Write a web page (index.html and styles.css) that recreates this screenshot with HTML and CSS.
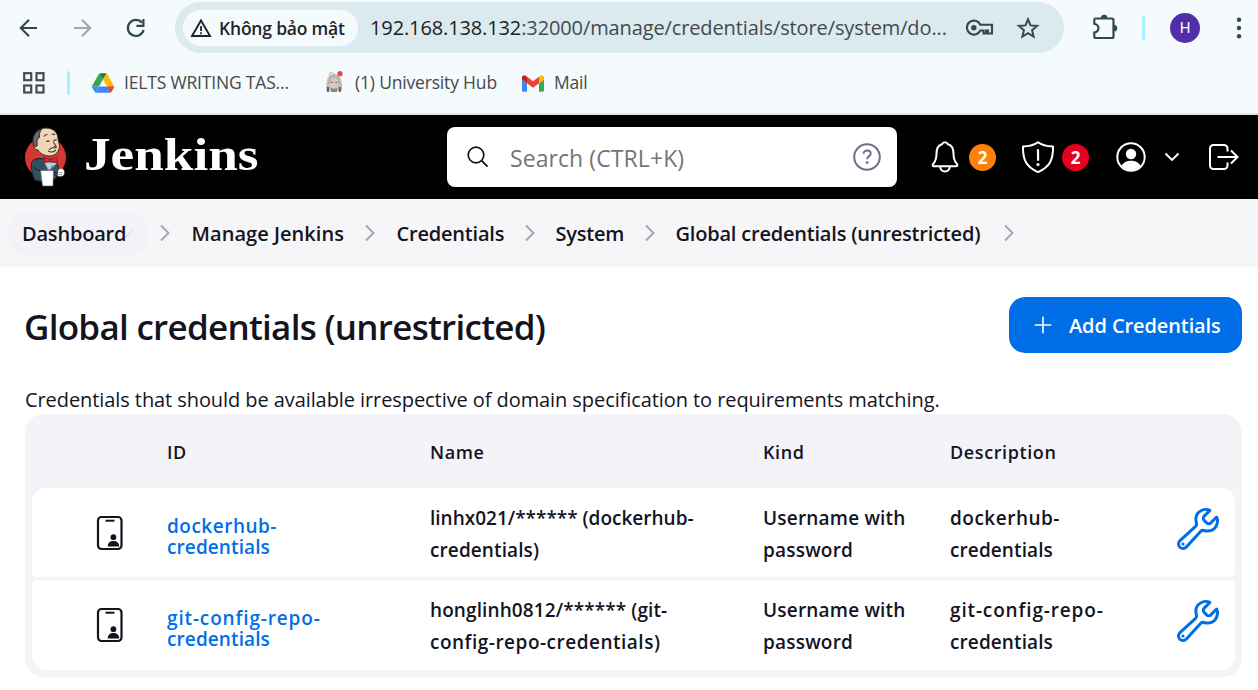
FILE: index.html
```
<!DOCTYPE html>
<html lang="vi">
<head>
<meta charset="utf-8">
<title>Global credentials (unrestricted) - Jenkins</title>
<link rel="stylesheet" href="styles.css">
</head>
<body>
<svg class="defs" width="0" height="0">
  <symbol id="chev" viewBox="0 0 12 18"><path d="M2 1.5 9.5 9 2 16.500" fill="none" stroke="#a5a5b8" stroke-width="2"/></symbol>
  <symbol id="idcard" viewBox="0 0 28 36"><rect x="2" y="2" width="23.500" height="32" rx="3.500" fill="none" stroke="#14141f" stroke-width="2.200"/><path d="M9.500 5.700h9" stroke="#14141f" stroke-width="2"/><circle cx="17.400" cy="22.200" r="2.900" fill="#14141f"/><path d="M11.700 31.500c0-3.500 2.200-5.400 5.700-5.400s5.800 1.900 5.800 5.400z" fill="#14141f"/></symbol>
  <symbol id="wrench" viewBox="0 0 512 512"><path d="M393.870 190a32.100 32.100 0 0 1-45.250 0l-26.570-26.570a32.090 32.090 0 0 1 0-45.260L382.190 58a1 1 0 0 0-.3-1.640c-38.820-16.640-89.150-8.160-121.110 23.570-30.580 30.350-32.320 76-21.120 115.840a31.930 31.930 0 0 1-9.060 32.080L64 380a48.170 48.170 0 1 0 68 68l153.860-167a31.930 31.930 0 0 1 31.600-9.130c39.540 10.590 84.540 8.600 114.720-21.190 32.490-32 39.500-88.560 23.750-120.930a1 1 0 0 0-1.600-.26z" fill="none" stroke="#006ee6" stroke-width="32" stroke-linecap="round" stroke-miterlimit="10"/><circle cx="96" cy="416" r="17" fill="#006ee6"/></symbol>
</svg>

<header class="browser">
  <div class="toolbar">
    <svg class="nav-back" width="20" height="20" viewBox="0 0 20 20"><path d="M18 10H2.500M10 1.800 1.800 10l8.200 8.200" fill="none" stroke="#30494e" stroke-width="2.100"/></svg>
    <svg class="nav-fwd" width="20" height="20" viewBox="0 0 20 20"><path d="M1 10h15.500M9 1.800l8.200 8.200L9 18.200" fill="none" stroke="#a2a6a8" stroke-width="2.100"/></svg>
    <svg class="nav-reload" width="20" height="20" viewBox="0 0 20 20"><path d="M16 4.800A8 8 0 1 0 17.600 12" fill="none" stroke="#30494e" stroke-width="2.200"/><path d="M17.400 1v6.800h-7" fill="none" stroke="#30494e" stroke-width="2.200"/></svg>
    <div class="omnibox">
      <div class="chip">
        <svg width="22" height="20" viewBox="0 0 22 20"><path d="M11 2.500 20 18H2z" fill="none" stroke="#1f2426" stroke-width="1.900"/><path d="M11 8v5M11 14.200v2" stroke="#1f2426" stroke-width="1.800"/></svg>
        <span>Không bảo mật</span>
      </div>
      <div class="url"><b>192.168.138.132</b>:32000/manage/credentials/store/system/do...</div>
      <svg class="key" width="28" height="18" viewBox="0 0 28 18"><path d="M14.300 5.700A7 7 0 1 0 14.300 11.500H17.500V14.500H20V11.500H22V14.500H26V5.700Z" fill="none" stroke="#3f4547" stroke-width="2.100"/><circle cx="7.800" cy="8.700" r="2.700" fill="#3f4547"/></svg>
      <svg class="star" width="24" height="24" viewBox="0 0 24 24"><path d="m12 3.300 2.500 6.100 6.600.5-5 4.300 1.500 6.400-5.600-3.400-5.600 3.400 1.500-6.400-5-4.300 6.600-.5z" fill="none" stroke="#3f4547" stroke-width="2"/></svg>
    </div>
    <svg class="puzzle" width="26" height="26" viewBox="0 0 26 26"><path d="M3.500 4.500H20a1.500 1.500 0 0 1 1.500 1.500v16.500a1.500 1.500 0 0 1-1.500 1.500H3.500a1.200 1.200 0 0 1-1.200-1.200V18.500c5.500-1.200 5.500-7.500 0-8.700V5.700a1.200 1.200 0 0 1 1.200-1.200z" fill="none" stroke="#30494e" stroke-width="2.200"/><path d="M9 4a3.200 3.200 0 0 1 6.400 0zM22 11a3.200 3.200 0 0 1 0 6.400z" fill="#30494e"/></svg>
    <i class="bar"></i>
    <div class="avatar">H</div>
    <svg class="dots" width="6" height="22" viewBox="0 0 6 22"><g fill="#30494e"><circle cx="3" cy="2.800" r="2.200"/><circle cx="3" cy="11" r="2.200"/><circle cx="3" cy="19.200" r="2.200"/></g></svg>
  </div>
  <div class="bookmarks">
    <svg width="22" height="22" viewBox="0 0 22 22"><g fill="none" stroke="#474b4d" stroke-width="2.200"><rect x="1.200" y="1.200" width="7" height="7"/><rect x="13.500" y="1.200" width="7" height="7"/><rect x="1.200" y="13.500" width="7" height="7"/><rect x="13.500" y="13.500" width="7" height="7"/></g></svg>
    <i class="bar"></i>
    <svg class="drive" width="22" height="20" viewBox="0 0 87.300 78"><path d="m6.600 66.850 3.850 6.650c.8 1.400 1.950 2.500 3.300 3.300l13.750-23.800h-27.500c0 1.550.4 3.100 1.200 4.500z" fill="#4285f4"/><path d="m43.650 25-13.750-23.800c-1.350.8-2.500 1.900-3.300 3.300l-25.400 44a9 9 0 0 0-1.200 4.500h27.500z" fill="#34a853"/><path d="m73.550 76.800c1.350-.8 2.500-1.900 3.300-3.300l9.250-16a9 9 0 0 0 1.200-4.500h-27.500l5.850 11.500z" fill="#ea4335"/><path d="m43.650 25 13.750-23.800c-1.350-.8-2.900-1.200-4.500-1.200h-18.500c-1.600 0-3.150.45-4.500 1.200z" fill="#188038"/><path d="m59.800 53h-32.300l-13.750 23.800c1.350.8 2.900 1.200 4.500 1.200h50.800c1.600 0 3.150-.45 4.500-1.200z" fill="#4285f4"/><path d="m73.400 26.500-12.700-22c-.8-1.400-1.950-2.500-3.300-3.300l-13.750 23.800 16.150 28h27.450c0-1.550-.4-3.100-1.200-4.500z" fill="#fbbc04"/><path d="M59.800 53h27.500c0 1.550-.4 3.100-1.200 4.500l-9.250 16c-.8 1.400-1.950 2.500-3.300 3.300z" fill="#ea4335"/></svg>
    <span class="bm bm-drive">IELTS WRITING TAS...</span>
    <svg class="hub" width="20" height="22" viewBox="0 0 20 22"><path d="M1.200 20C1 8 3 3 9 3s8.500 5 8 17z" fill="#c4beb6"/><path d="M5 9c2-3 6-3 8 0v6c-2 3-6 3-8 0z" fill="#e0c7bb"/><path d="M4.500 4c0-3 3-3 4-1M9 3v5M6 5l-2 8M12 5l2.500 8" stroke="#aaa49d" fill="none"/><path d="M3 16v5M14.800 16v5" stroke="#4f6278" stroke-width="2"/><path d="M6 21v-4l3 1 3-1v4z" fill="#9c817a"/><path d="M5.800 11.300h2M10.300 11.300h2" stroke="#596273"/><circle cx="15" cy="2.700" r="2.600" fill="#ec4059"/></svg>
    <span class="bm bm-hub">(1) University Hub</span>
    <svg class="gmail" width="22" height="17" viewBox="52 42 88 66"><path fill="#4285f4" d="M58 108h14V74L52 59v43c0 3.320 2.690 6 6 6"/><path fill="#34a853" d="M120 108h14c3.320 0 6-2.690 6-6V59l-20 15"/><path fill="#fbbc04" d="M120 48v26l20-15v-8c0-7.420-8.470-11.650-14.400-7.200"/><path fill="#ea4335" d="M72 74V48l24 18 24-18v26L96 92"/><path fill="#c5221f" d="M52 51v8l20 15V48l-5.600-4.200C60.470 39.350 52 43.580 52 51"/></svg>
    <span class="bm">Mail</span>
  </div>
</header>

<div class="jenkins-header">
  <svg class="butler" width="44" height="62" viewBox="0 0 44 62">
    <ellipse cx="21.500" cy="31.500" rx="20.500" ry="20.500" fill="#d33833"/>
    <path d="M14 32.500c-5 1-7 3-6.500 7 0 6 1 10 3.500 15l7 1 14-3 2-7c1-6-1-10-5-12z" fill="#335061" stroke="#17202a"/>
    <path d="M10 18C8 8 14 2 22 2c8 0 12 5 12 11l1.500 6.500c0 6-4 10.500-9.500 10.500-5 0-10-2-12-6-3 0-4-2-4-6z" fill="#f0d6b7" stroke="#2b2b2b"/>
    <path d="M9.500 18c-2-6 1-12.500 8-15-2 3-2.500 6-2 8l-2.500 3v6c-2 1-3 0-3.500-2z" fill="#6d6b6d" stroke="#222"/>
    <path d="M20 10.500q1-2 3.500-2M28 8.500q2-1 3 .5M22 15q2 1 3.500-.5M29.500 14q1.500 1 3-.5M29 15.500l3 4.500-2.500.8M25 24q2-3 6-2 1-1 2-1M24 25q4 2.500 8-1" fill="none" stroke="#4b3d31" stroke-width="1.100"/>
    <path d="m20 36 5 9 8-8z" fill="#b8d2df"/>
    <path d="m20 31 6 2.500 7-2.500.5 6-7-2-6 2z" fill="#e0242d" stroke="#81171a" stroke-width=".7"/>
    <path d="m22 40 3 5 4-6" fill="none" stroke="#6289a0" stroke-width="1.100"/>
    <path d="M10 40q0 4 7 5" fill="none" stroke="#17202a"/>
    <path d="M16.500 44.500h13l-.5 15.500h-10.500z" fill="#fff" stroke="#555" stroke-width=".6"/>
    <path d="M30 45h4v5h-4z" fill="#273f50"/>
    <path d="M34 44c3-3 7-1 6.500 3-.5 4-4 4-7 3z" fill="#fff" stroke="#555" stroke-width=".7"/><path d="M35 46.500h4M35 48.500h3" stroke="#777" stroke-width=".6"/>
  </svg>
  <span class="wordmark"><span class="wordmark-text">Jenkins</span></span>
  <div class="search">
    <svg width="22" height="22" viewBox="0 0 22 22"><circle cx="9" cy="9" r="7.800" fill="none" stroke="#14141f" stroke-width="1.700"/><path d="m14.600 14.600 6 6" stroke="#14141f" stroke-width="1.800"/></svg>
    <span class="placeholder">Search (CTRL+K)</span>
    <svg class="help" width="30" height="30" viewBox="0 0 30 30"><circle cx="15" cy="15" r="12.800" fill="none" stroke="#6e6e8c" stroke-width="2"/><path d="M11.500 11.700c0-4.500 7.700-4.300 7.200.2-.3 2.200-3.600 2.600-3.600 5.300" fill="none" stroke="#6e6e8c" stroke-width="2"/><circle cx="15.100" cy="20.600" r="1.400" fill="#6e6e8c"/></svg>
  </div>
  <svg class="bell" width="28" height="34" viewBox="0 0 28 34"><path d="M14 2.300c-1.800 0-2.500 1-3 2C6.500 5.600 5.500 9 5.500 13.500c0 7-1.500 8-3.500 10.500-.9 1.200-.3 2.300 1 2.300h22c1.300 0 1.900-1.100 1-2.300-2-2.500-3.500-3.500-3.500-10.500 0-4.500-1-7.900-5.500-9.200-.5-1-1.200-2-3-2zM9.200 26.500c0 6.500 9.600 6.500 9.600 0" fill="none" stroke="#fff" stroke-width="2"/></svg>
  <span class="count orange">2</span>
  <svg class="shield" width="34" height="34" viewBox="0 0 34 34"><path d="M17 2.300c-4 3.100-8.700 4-15 4.300-.3 13 3 20 15 25.500 12-5.500 15.300-12.500 15-25.500-6.300-.3-11-1.200-15-4.300z" fill="none" stroke="#fff" stroke-width="2" stroke-linejoin="round"/><path d="m17 10 .1 10" stroke="#fff" stroke-width="2.200" stroke-linecap="round"/><circle cx="17" cy="24.500" r="1.600" fill="#fff"/></svg>
  <span class="count red">2</span>
  <svg class="user" width="30" height="30" viewBox="0 0 30 30"><circle cx="15" cy="15" r="13.700" fill="none" stroke="#fff" stroke-width="2"/><circle cx="15" cy="12" r="5.200" fill="#fff"/><path d="M5.500 24c3-7 16-7 19 0-5 6-14 6-19 0z" fill="#fff"/></svg>
  <svg class="caret" width="16" height="10" viewBox="0 0 16 10"><path d="m1.500 1.500 6.500 6.500 6.500-6.500" fill="none" stroke="#fff" stroke-width="1.900"/></svg>
  <svg class="logout" width="32" height="28" viewBox="0 0 32 28"><path d="M19.500 8.500V5.500a3.500 3.500 0 0 0-3.500-3.500H5.500A3.500 3.500 0 0 0 2 5.500v17A3.500 3.500 0 0 0 5.500 26H16a3.500 3.500 0 0 0 3.500-3.500v-3M9.500 14H29M23 7.500l6.500 6.500-6.500 6.500" fill="none" stroke="#fff" stroke-width="2"/></svg>
</div>

<nav class="crumbs">
  <span class="crumb active">Dashboard<svg class="mini" width="8" height="8" viewBox="0 0 8 8"><path d="M1 7 7 1" stroke="#d9d9e0" stroke-width="1.500"/></svg></span>
  <svg class="sep"><use href="#chev"/></svg><span class="crumb manage">Manage Jenkins</span>
  <svg class="sep"><use href="#chev"/></svg><span class="crumb">Credentials</span>
  <svg class="sep"><use href="#chev"/></svg><span class="crumb">System</span>
  <svg class="sep"><use href="#chev"/></svg><span class="crumb">Global credentials (unrestricted)</span>
  <svg class="sep"><use href="#chev"/></svg>
</nav>

<main>
  <div class="title-row">
    <h1>Global credentials (unrestricted)</h1>
    <div class="add"><svg width="18" height="18" viewBox="0 0 18 18"><path d="M9 .8v16.400M.8 9h16.400" stroke="#fff" stroke-width="1.600"/></svg><span>Add Credentials</span></div>
  </div>
  <p class="intro">Credentials that should be available irrespective of domain specification to requirements matching.</p>
  <section class="table">
    <div class="row head"><span></span><span>ID</span><span>Name</span><span>Kind</span><span>Description</span><span></span></div>
    <div class="row first">
      <svg class="idcard"><use href="#idcard"/></svg>
      <a><span class="loose">dockerhub-</span><br>credentials</a>
      <span><span class="tight">linhx021/****** (dockerhub-</span><br>credentials)</span>
      <span class="kind">Username with<br>password</span>
      <span><span class="loose">dockerhub-</span><br>credentials</span>
      <svg class="wrench"><use href="#wrench"/></svg>
    </div>
    <div class="row last">
      <svg class="idcard"><use href="#idcard"/></svg>
      <a><span class="wide">git-config-repo-</span><br>credentials</a>
      <span>honglinh0812/****** (git-<br><span class="loose">config-repo-credentials)</span></span>
      <span class="kind">Username with<br>password</span>
      <span><span class="wide">git-config-repo-</span><br>credentials</span>
      <svg class="wrench"><use href="#wrench"/></svg>
    </div>
  </section>
</main>
</body>
</html>
```
FILE: styles.css
```
* { box-sizing: border-box; }
body { margin: 0; width: 1258px; height: 690px; overflow: hidden; background: #fff; color: #14141f; font-family: "Open Sans", "Noto Sans", sans-serif; white-space: nowrap; }
svg { display: block; flex: none; overflow: visible; }
.defs { position: absolute; }

.browser { height: 115px; background: #f5fafd; border-bottom: 2px solid #dbe5e8; }
.toolbar { height: 55px; padding-left: 19px; display: flex; align-items: center; }
.nav-fwd { margin-left: 34px; }
.nav-reload { margin-left: 33px; }
.omnibox { flex: none; width: 889px; height: 51px; margin-left: 29px; padding-left: 8px; border-radius: 26px; background: #dbeaef; display: flex; align-items: center; }
.chip { width: 175px; height: 36px; padding-left: 7px; border-radius: 18px; background: #f5fafd; display: flex; align-items: center; gap: 7px; font-size: 17.500px; font-weight: 600; letter-spacing: -.2px; color: #1f2426; }
.url { width: 578px; margin-left: 12px; font-size: 20px; letter-spacing: -.12px; color: #45494b; }
.url b { font-weight: 400; color: #1c2022; }
.key { margin-left: 18px; }
.star { margin-left: 22px; }
.puzzle { margin-left: 28px; margin-top: -2px; }
.bar { width: 3px; height: 24px; border-radius: 2px; background: #a5f2ff; }
.toolbar .bar { margin-left: 24px; }
.avatar { width: 30px; height: 30px; margin-left: 25px; border-radius: 50%; background: #512da8; color: #fff; font: 15px/30px Roboto, sans-serif; text-align: center; }
.dots { margin-left: 36px; }
.bookmarks { height: 56px; padding-left: 23px; display: flex; align-items: center; color: #45494b; font-size: 17.500px; }
.bookmarks .bar { margin-left: 22px; }
.drive { margin-left: 22px; }
.bm { margin-left: 10px; margin-top: -2px; letter-spacing: -.18px; }
.bm-drive { width: 166px; }
.hub { margin-left: 35px; margin-top: -2px; }
.bm-hub { width: 142px; }
.gmail { margin-left: 25px; }

.jenkins-header { height: 84px; background: #000; padding-left: 24px; display: flex; align-items: center; }
.wordmark { width: 363px; margin-left: 16px; margin-top: -5px; color: #fff; font: bold 46px/50px "Liberation Serif", serif; }
.wordmark-text { display: inline-block; transform: scaleX(1.157); transform-origin: left; }
.search { width: 450px; height: 60px; padding: 0 15px 0 20px; border-radius: 8px; background: #fff; display: flex; align-items: center; gap: 21px; color: #757575; font-size: 23px; }
.placeholder { padding-top: 1px; letter-spacing: .08px; }
.help { margin-left: auto; }
.bell { margin-left: 34px; }
.count { width: 27px; height: 27px; border-radius: 50%; color: #fff; font-size: 17px; font-weight: 700; line-height: 27px; text-align: center; }
.orange { margin-left: 10px; background: #fe820a; }
.shield { margin-left: 25px; }
.red { margin-left: 7px; background: #e6001f; }
.user { margin-left: 27px; }
.caret { margin-left: 18px; }
.logout { margin-left: 28px; }

.crumbs { height: 68px; padding: 0 0 0 8px; background: #f6f6f8; display: grid; grid-template-columns: 151px 32.500px 172.500px 32.500px 127px 32px 88px 32px 327px 20px; align-items: center; font-size: 20px; font-weight: 560; letter-spacing: -.2px; }
.crumb { line-height: 43px; }
.active { width: 141px; padding-left: 14px; border-radius: 20px; background: #f2f2f7; position: relative; }
.manage { letter-spacing: .05px; }
.mini { position: absolute; left: 117px; top: 18px; }
.sep { width: 12px; height: 18px; }

main { padding: 30px 16px 0 25px; }
.title-row { height: 56px; display: flex; justify-content: space-between; align-items: center; }
h1 { margin: 4px 0 0 -1px; font-size: 35px; font-weight: 570; line-height: 46px; letter-spacing: -.72px; }
.add { width: 233px; height: 56px; padding-left: 25px; border-radius: 16px; background: #006ee6; color: #fff; display: flex; align-items: center; gap: 17px; font-size: 20px; font-weight: 600; letter-spacing: -.1px; }
.intro { margin: 31px 0 0; height: 30px; font-size: 20px; line-height: 32px; letter-spacing: -.08px; }
.table { height: 263px; padding: 0 7px; border-radius: 19px; background: #f3f3f8; }
.row { height: 89px; display: grid; grid-template-columns: 135px 263px 333px 187px 226px 44px; align-items: center; background: #fff; font-size: 19px; font-weight: 550; line-height: 32px; letter-spacing: .1px; }
.row > span { padding-top: 2px; }
.head { height: 74px; background: none; font-size: 18px; letter-spacing: .6px; }
.first { border-radius: 14px 14px 5px 5px; }
.last { height: 90px; margin-top: 3px; border-radius: 5px 5px 14px 14px; }
.row a { color: #006ee6; line-height: 21px; margin-top: 8px; }
.kind { letter-spacing: .2px; }
.tight { letter-spacing: 0; }
.loose { letter-spacing: .5px; }
.wide { letter-spacing: .85px; }
.idcard { width: 28px; height: 36px; margin-left: 64px; }
.wrench { width: 48px; height: 48px; margin: -8px 0 0 -2px; }
```
